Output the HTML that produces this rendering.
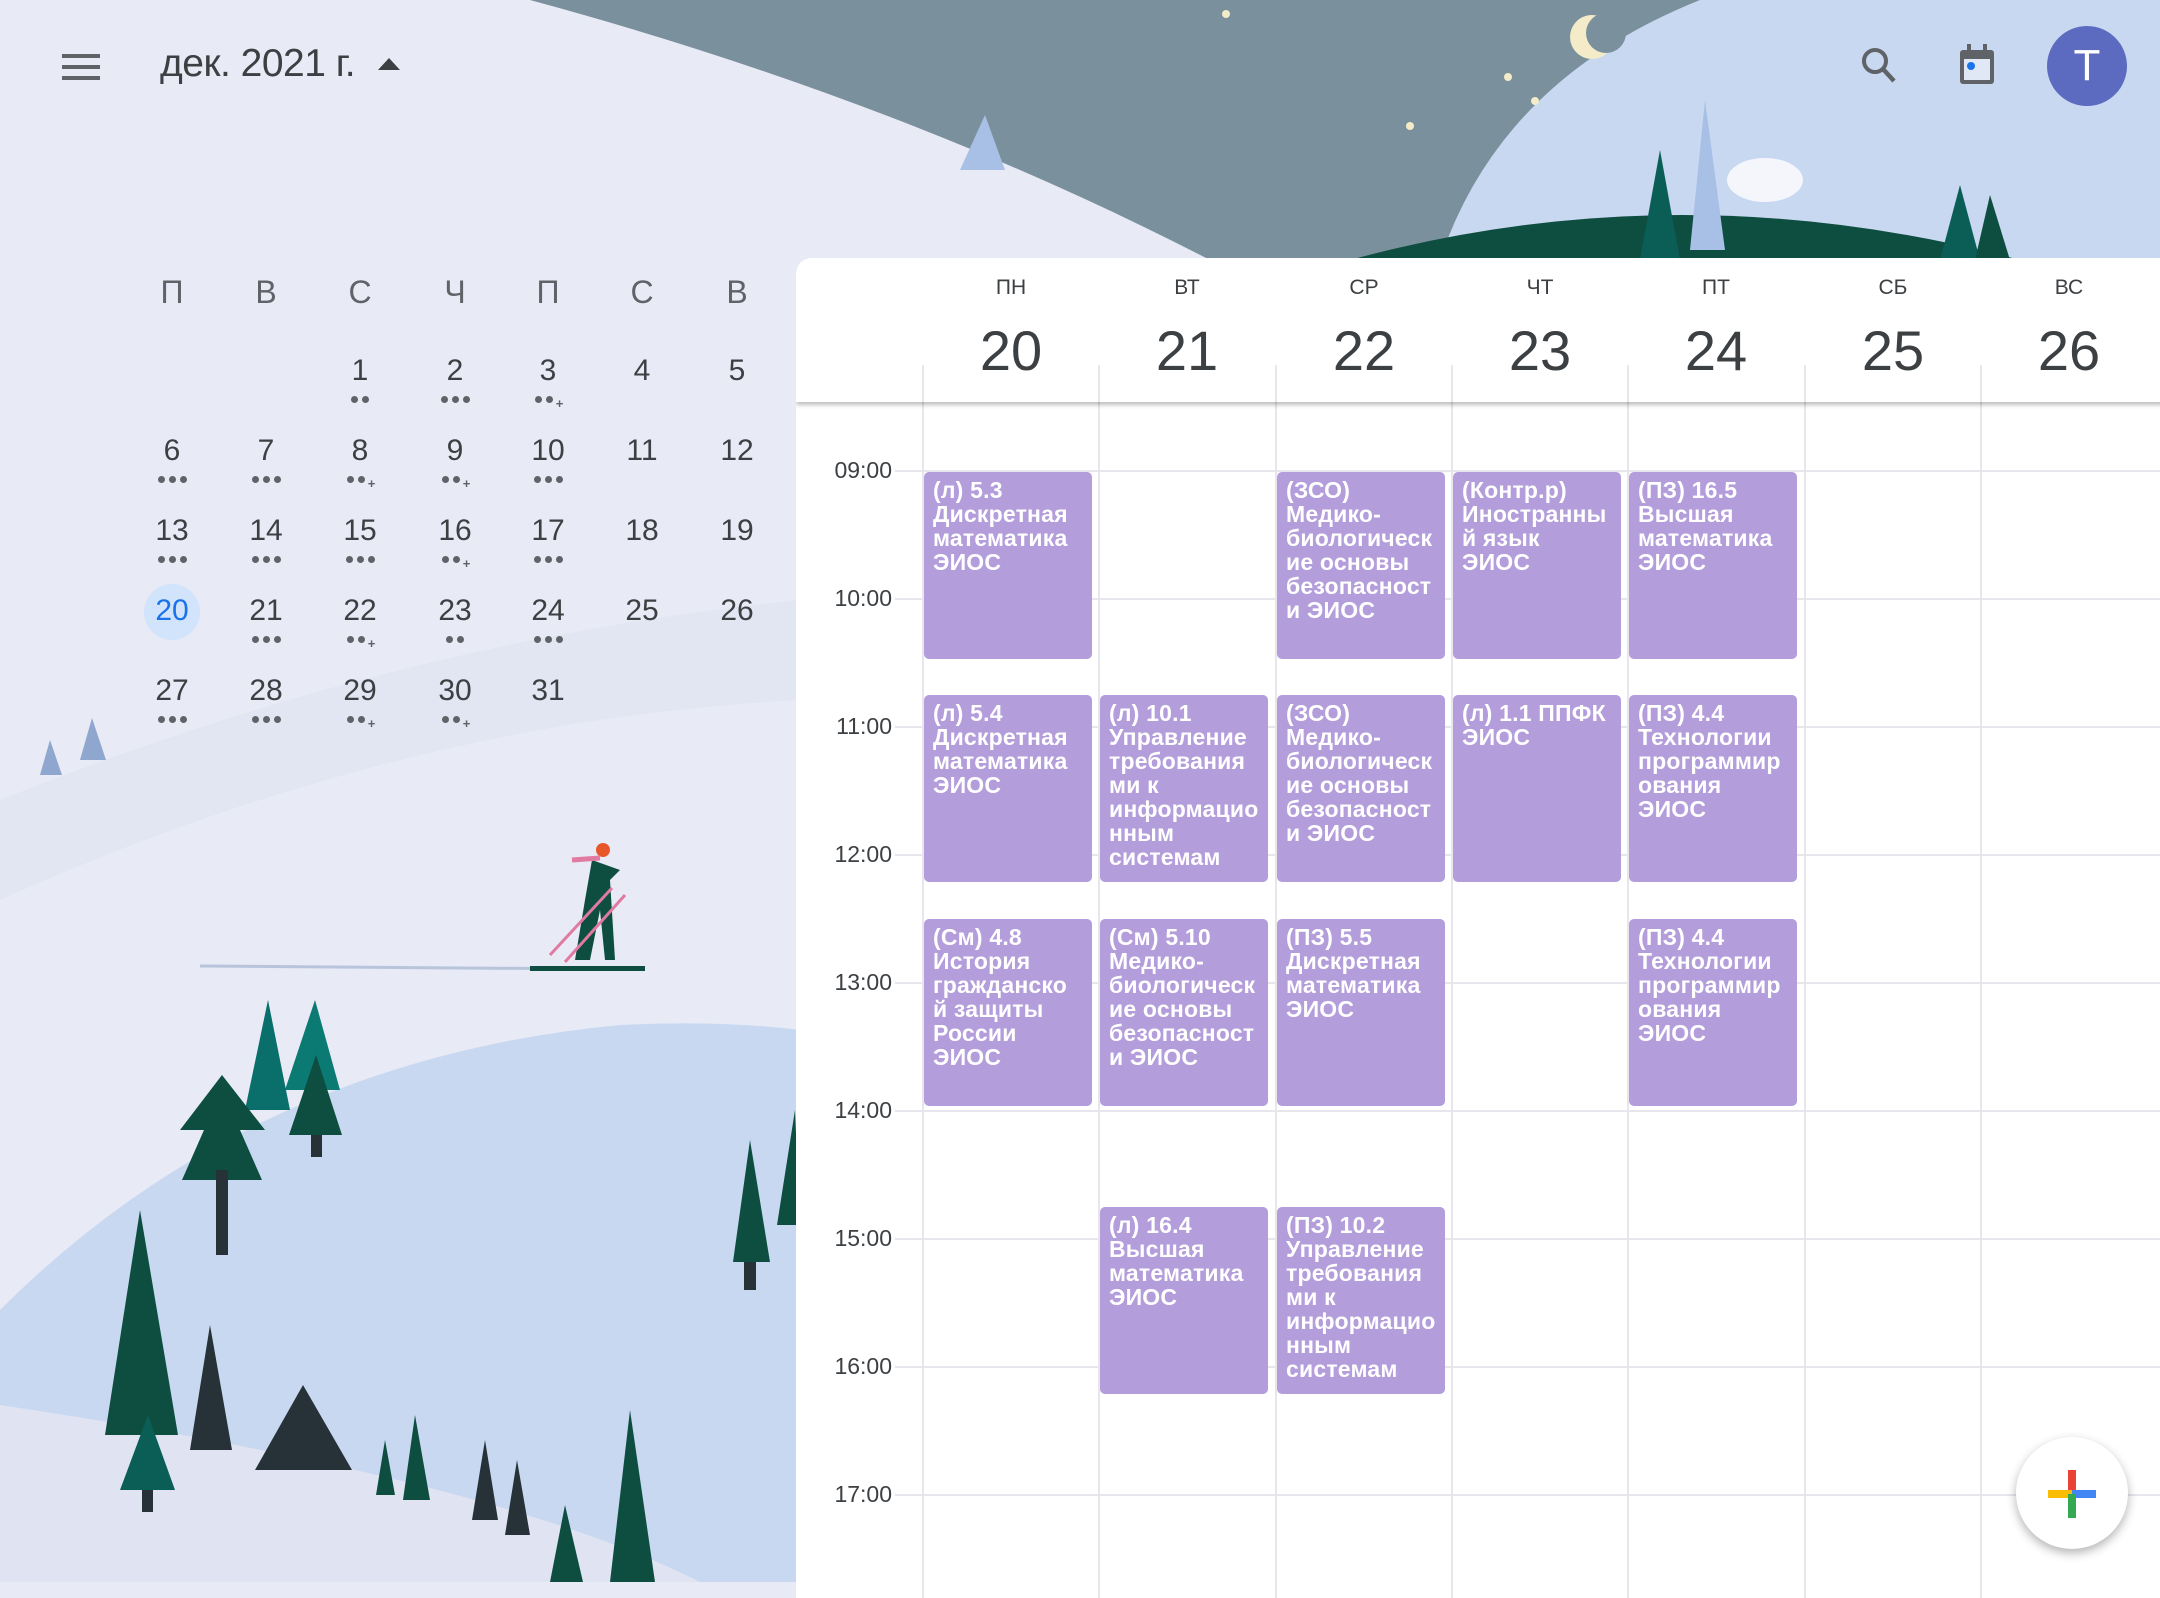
<!DOCTYPE html>
<html><head><meta charset="utf-8"><style>
*{margin:0;padding:0;box-sizing:border-box}
body{width:2160px;height:1582px;overflow:hidden;position:relative;background:#e8eaf6;font-family:"Liberation Sans","Noto Sans CJK SC",sans-serif;color:#3c4043}
.abs{position:absolute}
#bg{position:absolute;left:0;top:0}
.title{left:160px;top:42px;font-size:39px;color:#3c4043;letter-spacing:-0.5px}
.mc{position:absolute;width:80px;text-align:center;font-size:30px;color:#3c4043}
.mh{color:#5f6368;font-size:32px}
.dots{position:absolute;width:80px;text-align:center;font-size:0;line-height:0}
.dots i{display:inline-block;width:7px;height:7px;border-radius:50%;background:#5f6368;margin:0 2px}
.dots b{display:inline-block;font-size:13px;line-height:7px;color:#5f6368;margin-left:1px;vertical-align:middle;font-weight:bold}
#panel{position:absolute;left:796px;top:258px;width:1380px;height:1340px;background:#fff;border-radius:16px 0 0 0;overflow:hidden}
.hdr{position:absolute;left:0;top:0;width:1380px;height:144px;background:#fff;box-shadow:0 3px 4px rgba(0,0,0,.25);z-index:3}
.dn{position:absolute;width:176px;text-align:center;font-size:21px;color:#3c4043;top:18px}
.dd{position:absolute;width:176px;text-align:center;font-size:56px;color:#3c4043;top:60px}
.vl{position:absolute;width:2px;background:#e6e6ec}
.hl{position:absolute;height:2px;background:#e6e6ec;left:99px;width:1300px}
.tl{position:absolute;left:0;width:96px;text-align:right;font-size:23px;color:#3c4043}
.ev{position:absolute;width:168px;height:187px;background:#b39ddb;border-radius:5px;color:#fff;font-size:23px;line-height:24px;font-weight:bold;padding:6px 0 0 9px;overflow:hidden;white-space:nowrap;letter-spacing:0.2px;z-index:2}
</style></head><body>
<svg id="bg" width="2160" height="1582" viewBox="0 0 2160 1582">
<rect width="2160" height="1582" fill="#e8eaf6"/>
<path d="M0,800 Q400,640 800,600 L800,700 Q400,720 0,900Z" fill="#e2e5f2"/>
<path d="M1620,0 L2160,0 L2160,260 L1440,260 Q1500,60 1700,0Z" fill="#c8d8f0"/>
<path d="M530,0 L1700,0 Q1500,80 1440,260 L1210,260 Q900,100 530,0Z" fill="#7a909c"/>
<path d="M1350,260 Q1680,170 2020,260Z" fill="#0e4e41"/>
<polygon points="1640,260 1660,150 1680,260" fill="#0a5e56"/>
<polygon points="1690,250 1705,100 1725,250" fill="#a8c0e6"/>
<polygon points="1940,260 1960,185 1980,260" fill="#0a5e56"/>
<polygon points="1975,260 1990,195 2010,260" fill="#0e4e41"/>
<polygon points="960,170 985,115 1005,170" fill="#a8c0e6"/>
<ellipse cx="1765" cy="180" rx="38" ry="22" fill="#f4f6fb"/>
<circle cx="1592" cy="37" r="22" fill="#f4ecc8"/><circle cx="1606" cy="33" r="20" fill="#7a909c"/>
<circle cx="1226" cy="14" r="4" fill="#f4ecc8"/><circle cx="1508" cy="77" r="4" fill="#f4ecc8"/><circle cx="1535" cy="101" r="4" fill="#f4ecc8"/><circle cx="1410" cy="126" r="4" fill="#f4ecc8"/>
<path d="M0,1310 Q250,1060 620,1025 Q720,1020 800,1030 L800,1582 L0,1582Z" fill="#c8d8f0"/>
<path d="M0,1405 Q500,1480 700,1582 L0,1582Z" fill="#e0e4f2"/>
<polygon points="40,775 50,740 62,775" fill="#8fa6cf"/><polygon points="80,760 92,718 106,760" fill="#8fa6cf"/>
<polygon points="245,1110 268,1000 290,1110" fill="#0a6e6a"/><polygon points="285,1090 315,1000 340,1090" fill="#0a7a72"/>
<polygon points="180,1130 222,1075 265,1130 240,1130 262,1180 182,1180 204,1130" fill="#0e4e41"/><rect x="216" y="1170" width="12" height="85" fill="#263238"/>
<polygon points="289,1135 316,1055 342,1135" fill="#0e4e41"/><rect x="311" y="1135" width="11" height="22" fill="#263238"/>
<polygon points="105,1435 140,1210 178,1435" fill="#0e4e41"/>
<polygon points="190,1450 210,1325 232,1450" fill="#263238"/>
<polygon points="255,1470 303,1385 352,1470" fill="#263238"/>
<polygon points="120,1490 148,1415 175,1490" fill="#0a5e56"/><rect x="142" y="1490" width="11" height="22" fill="#263238"/>
<polygon points="376,1495 385,1440 395,1495" fill="#0e4e41"/><polygon points="403,1500 415,1415 430,1500" fill="#0e4e41"/>
<polygon points="472,1520 485,1440 498,1520" fill="#263238"/><polygon points="505,1535 517,1460 530,1535" fill="#263238"/>
<polygon points="550,1582 565,1505 583,1582" fill="#0e4e41"/><polygon points="610,1582 630,1410 655,1582" fill="#0e4e41"/>
<polygon points="733,1262 750,1140 770,1262" fill="#0e4e41"/><polygon points="777,1225 795,1110 800,1225" fill="#0e4e41"/>
<rect x="744" y="1262" width="12" height="28" fill="#263238"/>
<line x1="200" y1="966" x2="600" y2="969" stroke="#b8c4dc" stroke-width="3"/>
<rect x="530" y="966" width="115" height="5" fill="#0e4e41"/>
<path d="M592,860 L585,900 L575,960 L590,960 L600,910 L605,960 L615,960 L610,880 L620,870Z" fill="#0e4e41"/>
<circle cx="603" cy="850" r="7" fill="#e8572c"/>
<line x1="572" y1="860" x2="600" y2="858" stroke="#e07aa0" stroke-width="5"/>
<line x1="550" y1="955" x2="612" y2="888" stroke="#e07aa0" stroke-width="3"/>
<line x1="565" y1="962" x2="625" y2="895" stroke="#e07aa0" stroke-width="3"/>
</svg>

<svg class="abs" style="left:62px;top:54px" width="38" height="26"><rect y="0" width="38" height="4" fill="#5f6368"/><rect y="11" width="38" height="4" fill="#5f6368"/><rect y="22" width="38" height="4" fill="#5f6368"/></svg>
<div class="abs title">дек. 2021 г.</div>
<svg class="abs" style="left:378px;top:58px" width="22" height="12"><polygon points="0,12 11,0 22,12" fill="#3c4043"/></svg>

<svg class="abs" style="left:1860px;top:46px" width="40" height="40" viewBox="0 0 40 40"><circle cx="15" cy="15" r="11" fill="none" stroke="#5f6368" stroke-width="4"/><line x1="23" y1="23" x2="34" y2="35" stroke="#5f6368" stroke-width="4.5"/></svg>
<svg class="abs" style="left:1958px;top:44px" width="38" height="42" viewBox="0 0 38 42"><rect x="9" y="0" width="4" height="8" fill="#5f6368"/><rect x="25" y="0" width="4" height="8" fill="#5f6368"/><rect x="2" y="6" width="34" height="34" rx="3" fill="#5f6368"/><rect x="6" y="15" width="26" height="21" fill="#e0e8f5"/><circle cx="13" cy="22" r="4" fill="#1a73e8"/></svg>
<div class="abs" style="left:2047px;top:26px;width:80px;height:80px;border-radius:50%;background:#5c6bc0;color:#fff;font-size:44px;text-align:center;line-height:80px">T</div>

<div class="mc mh" style="left:132px;top:274px">П</div><div class="mc mh" style="left:226px;top:274px">В</div><div class="mc mh" style="left:320px;top:274px">С</div><div class="mc mh" style="left:415px;top:274px">Ч</div><div class="mc mh" style="left:508px;top:274px">П</div><div class="mc mh" style="left:602px;top:274px">С</div><div class="mc mh" style="left:697px;top:274px">В</div>
<div class="abs" style="left:144px;top:584px;width:56px;height:56px;border-radius:50%;background:#d2e3fc"></div>
<div id="mini"></div>

<div id="panel">
<div class="hdr">
<div class="dn" style="left:127px">ПН</div><div class="dn" style="left:303px">ВТ</div><div class="dn" style="left:480px">СР</div><div class="dn" style="left:656px">ЧТ</div><div class="dn" style="left:832px">ПТ</div><div class="dn" style="left:1009px">СБ</div><div class="dn" style="left:1185px">ВС</div>
<div class="dd" style="left:127px">20</div><div class="dd" style="left:303px">21</div><div class="dd" style="left:480px">22</div><div class="dd" style="left:656px">23</div><div class="dd" style="left:832px">24</div><div class="dd" style="left:1009px">25</div><div class="dd" style="left:1185px">26</div>
<div class="vl" style="left:126px;top:107px;height:37px"></div><div class="vl" style="left:302px;top:107px;height:37px"></div><div class="vl" style="left:479px;top:107px;height:37px"></div><div class="vl" style="left:655px;top:107px;height:37px"></div><div class="vl" style="left:831px;top:107px;height:37px"></div><div class="vl" style="left:1008px;top:107px;height:37px"></div><div class="vl" style="left:1184px;top:107px;height:37px"></div>
</div>
<div id="grid"></div>
</div>

<div class="abs" style="left:2016px;top:1437px;width:112px;height:112px;border-radius:50%;background:#fff;box-shadow:0 4px 10px rgba(0,0,0,.3)"></div>
<svg class="abs" style="left:2048px;top:1470px" width="48" height="48"><rect x="20" y="0" width="8" height="24" fill="#ea4335"/><rect x="0" y="20" width="24" height="8" fill="#fbbc04"/><rect x="24" y="20" width="24" height="8" fill="#4285f4"/><rect x="20" y="24" width="8" height="24" fill="#34a853"/></svg>

<script>
var mx=[172,266,360,455,548,642,737],my=[372,452,532,612,692];
var days=[[null,null,[1,2],[2,3],[3,'2+'],[4,0],[5,0]],[[6,3],[7,3],[8,'2+'],[9,'2+'],[10,3],[11,0],[12,0]],[[13,3],[14,3],[15,3],[16,'2+'],[17,3],[18,0],[19,0]],[[20,0],[21,3],[22,'2+'],[23,2],[24,3],[25,0],[26,0]],[[27,3],[28,3],[29,'2+'],[30,'2+'],[31,0],null,null]];
var h='';
days.forEach(function(r,ri){r.forEach(function(d,ci){if(!d)return;var x=mx[ci]-40,y=my[ri];
h+='<div class="mc" style="left:'+x+'px;top:'+(y-18)+'px;'+(d[0]==20?'color:#1a73e8':'')+'">'+d[0]+'</div>';
if(d[1]){var s='';if(d[1]=='2+')s='<i></i><i></i><b>+</b>';else for(var k=0;k<d[1];k++)s+='<i></i>';h+='<div class="dots" style="left:'+x+'px;top:'+(y+24)+'px">'+s+'</div>';}
});});
document.getElementById('mini').innerHTML=h;
var g='';var cx=[127,303,480,656,832,1009,1185];
cx.forEach(function(x){g+='<div class="vl" style="left:'+(x-1)+'px;top:144px;height:1200px"></div>';});
for(var i=0;i<9;i++){var y=213+128*i;g+='<div class="hl" style="top:'+(y-1)+'px"></div><div class="tl" style="top:'+(y-14)+'px">'+(i+9<10?'0':'')+(i+9)+':00</div>';}
var T=[214,437,661,949];
var ev=[
[0,0,'(л) 5.3<br>Дискретная<br>математика<br>ЭИОС'],[0,1,'(л) 5.4<br>Дискретная<br>математика<br>ЭИОС'],[0,2,'(См) 4.8<br>История<br>гражданско<br>й защиты<br>России<br>ЭИОС'],
[1,1,'(л) 10.1<br>Управление<br>требования<br>ми к<br>информацио<br>нным<br>системам'],[1,2,'(См) 5.10<br>Медико-<br>биологическ<br>ие основы<br>безопасност<br>и ЭИОС'],[1,3,'(л) 16.4<br>Высшая<br>математика<br>ЭИОС'],
[2,0,'(ЗСО)<br>Медико-<br>биологическ<br>ие основы<br>безопасност<br>и ЭИОС'],[2,1,'(ЗСО)<br>Медико-<br>биологическ<br>ие основы<br>безопасност<br>и ЭИОС'],[2,2,'(ПЗ) 5.5<br>Дискретная<br>математика<br>ЭИОС'],[2,3,'(ПЗ) 10.2<br>Управление<br>требования<br>ми к<br>информацио<br>нным<br>системам'],
[3,0,'(Контр.р)<br>Иностранны<br>й язык<br>ЭИОС'],[3,1,'(л) 1.1 ППФК<br>ЭИОС'],
[4,0,'(ПЗ) 16.5<br>Высшая<br>математика<br>ЭИОС'],[4,1,'(ПЗ) 4.4<br>Технологии<br>программир<br>ования<br>ЭИОС'],[4,2,'(ПЗ) 4.4<br>Технологии<br>программир<br>ования<br>ЭИОС']];
ev.forEach(function(e){g+='<div class="ev" style="left:'+(cx[e[0]]+1)+'px;top:'+T[e[1]]+'px">'+e[2]+'</div>';});
document.getElementById('grid').innerHTML=g;
</script>
</body></html>
